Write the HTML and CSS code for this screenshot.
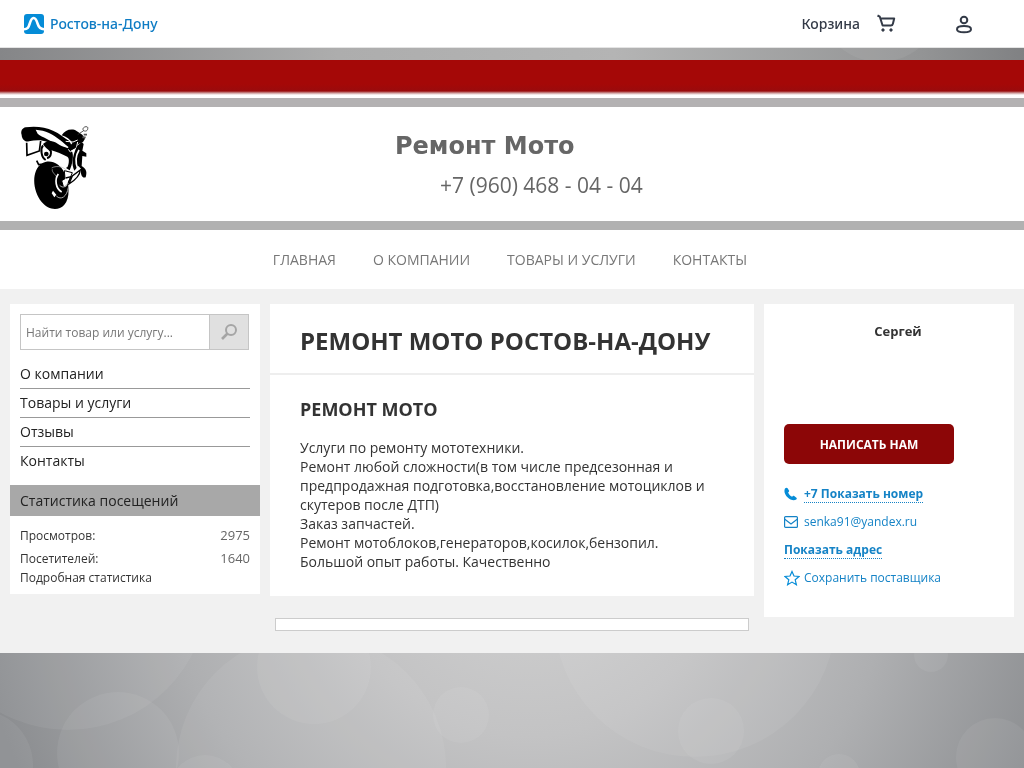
FILE: index.html
```html
<!DOCTYPE html>
<html lang="ru">
<head>
<meta charset="utf-8">
<meta name="viewport" content="width=device-width, initial-scale=1">
<title>Ремонт Мото Ростов-на-Дону</title>
<link rel="stylesheet" href="styles.css">
</head>
<body>
<svg class="backdrop" viewBox="0 0 1024 768" preserveAspectRatio="xMidYMax slice" aria-hidden="true">
  <defs>
    <radialGradient id="glow" gradientUnits="userSpaceOnUse" cx="530" cy="540" r="560">
      <stop offset="0" stop-color="#d2d2d2"/>
      <stop offset=".35" stop-color="#c3c3c4"/>
      <stop offset=".65" stop-color="#aeafb1"/>
      <stop offset="1" stop-color="#8b8d90"/>
    </radialGradient>
    <linearGradient id="topshade" x1="0" x2="1" y1="0" y2="0">
      <stop offset="0" stop-color="#858688"/>
      <stop offset=".33" stop-color="#adadad"/>
      <stop offset=".6" stop-color="#b4b4b4"/>
      <stop offset=".9" stop-color="#939495"/>
      <stop offset="1" stop-color="#808183"/>
    </linearGradient>
  </defs>
  <rect width="1024" height="768" fill="url(#glow)"/>
  <rect width="1024" height="100" fill="url(#topshade)"/>
  <g fill="#fff" fill-opacity=".06">
    <circle cx="68" cy="590" r="140"/>
    <circle cx="118" cy="753" r="61"/>
    <circle cx="-22" cy="765" r="55"/>
    <circle cx="311" cy="768" r="135"/>
    <circle cx="314" cy="667" r="57"/>
    <circle cx="461" cy="715" r="28"/>
    <circle cx="205" cy="790" r="35"/>
    <circle cx="695" cy="616" r="141"/>
    <circle cx="711" cy="731" r="33"/>
    <circle cx="931" cy="655" r="17"/>
    <circle cx="995" cy="757" r="39"/>
    <circle cx="839" cy="775" r="21"/>
    <circle cx="880" cy="0" r="62"/>
  </g>
</svg>

<header class="topbar">
  <a class="city" href="#">
    <svg width="20" height="20" viewBox="0 0 20 20" aria-hidden="true"><rect width="20" height="20" rx="3" fill="#058cd7"/><path d="M0 15.200c3.600 0 4.600-1.700 5.700-5.500C6.700 6 7.500 4 9.600 4s3 2 4 5.700c1.100 3.800 2.600 5.500 6.400 5.500" fill="none" stroke="#fff" stroke-width="2.600"/></svg>
    <span>Ростов-на-Дону</span>
  </a>
  <a class="cart" href="#">
    <span>Корзина</span>
    <svg width="20" height="20" viewBox="0 0 20 20" fill="none" stroke="#333a47" stroke-width="2" stroke-linejoin="round" aria-hidden="true"><path d="M.500 1.500l2.300 1.200L5.600 11.500h8.200c1.200 0 1.800-.6 2.100-1.800l1.300-5.200H3.500"/><circle cx="6" cy="16" r="1.200" fill="#333a47" stroke-width="1"/><circle cx="14" cy="16" r="1.200" fill="#333a47" stroke-width="1"/></svg>
  </a>
  <a class="user" href="#" aria-label="Личный кабинет">
    <svg width="18" height="20" viewBox="0 0 18 20" fill="none" stroke="#333a47" stroke-width="2" aria-hidden="true"><circle cx="9" cy="6" r="3.300"/><path d="M9 12c-4.500 0-7 1-7 3.200S4.500 18.200 9 18.200s7-.8 7-3-2.500-3.200-7-3.200z"/></svg>
  </a>
</header>

<div class="site">
  <div class="stripe"></div>
  <div class="banner">
    <svg class="logo" width="80" height="110" viewBox="3 -39 240 330" aria-label="Мотоцикл" role="img">
      <path d="M20 45c-4-12 2-21 12-23 30-5 60 0 82 10 20 9 32 20 50 32l6 14-10 16c-30-6-45-16-62-28-20-8-38-6-56-2-12 4-22-8-22-19z"/>
      <path d="M62 29c30 2 52 14 74 32 10 8 20 18 30 24l-4 12c-22-6-36-12-46-26-8-12-34-18-48-30z" fill="#fff"/>
      <path d="M35 68l1 38 37-13 4-30" fill="#fff" stroke="#000" stroke-width="5"/>
      <path d="M84 72c14-14 30-10 44-1 16 11 32 10 42 22 8 10 2 42-6 58l-10-6c6-16 6-26-6-32-14-8-32-10-42-18-8-8-18-14-22-23z"/>
      <path d="M107 90c14 4 34 12 50 20 7 4 5 22 0 32l-48-22c-6-8-8-20-2-30z" fill="#fff"/>
      <path d="M84 76c-8 10-6 36 8 44m8-38c12 8 10 30-4 32" fill="none" stroke="#000" stroke-width="6"/>
      <circle cx="94" cy="102" r="7"/>
      <path d="M140 46c10-14 22-20 40-16l22 14 8 12-6 10-14 6-10 14-18 8-6-8 16-16c-6-12-18-20-32-24z"/>
      <path d="M152 64l22 2 14-6M160 88l6 8 18-12 4-18" fill="none" stroke="#fff" stroke-width="3"/>
      <path d="M188 44l18-12c-8-8 8-16 12-10 2 8-4 14-12 10" fill="none" stroke="#333" stroke-width="2.500"/>
      <path d="M206 44h10M202 52h10" stroke="#555" stroke-width="5"/>
      <path d="M186 78l14-12 6 6-4 20 12 8v10l-12-2-2 30c16 10 16 20 12 34-12 4-16-12-14-26l-8-8-12 14c-8-18-8-38 8-74z"/>
      <path d="M192 90c-12 20-10 40-4 56" fill="none" stroke="#fff" stroke-width="5"/>
      <path d="M65 122l6 12 18-2" fill="none" stroke="#000" stroke-width="5"/>
      <path d="M82 130c22-14 54 0 66 28 16 34 18 76 0 96-18 20-48 16-68-8-28-34-32-96 2-116z"/>
      <path d="M110 144c16-10 42-2 48 12M112 148c-2 8 8 14 12 22" fill="none" stroke="#bbb" stroke-width="2"/>
      <path d="M130 162c-12 16-8 44 10 54" fill="none" stroke="#fff" stroke-width="5"/>
      <path d="M148 152l24 6-16 40c-6 6-10 4-12-2l-4-14 10-6z" fill="#fff" stroke="#000" stroke-width="3"/>
      <path d="M196 150c-2 22-22 34-34 42l10-24z" fill="#fff" stroke="#000" stroke-width="4"/>
      <path d="M114 212l10 12-6 8-8-12z" fill="#fff"/>
      <path d="M124 228c14 14 32 2 36-26M134 196c10 10 18 4 24-6" fill="none" stroke="#aaa" stroke-width="3"/>
      <path d="M152 174l16-4-8 18" fill="none" stroke="#000" stroke-width="4"/>
    </svg>
    <div class="brand">
      <p class="brand-name">Ремонт Мото</p>
      <p class="brand-phone">+7 (960) 468 - 04 - 04</p>
    </div>
  </div>
  <nav class="menu">
    <a href="#">ГЛАВНАЯ</a>
    <a href="#">О КОМПАНИИ</a>
    <a href="#">ТОВАРЫ И УСЛУГИ</a>
    <a href="#">КОНТАКТЫ</a>
  </nav>

  <div class="columns">
    <aside class="card side">
      <form class="search">
        <input type="text" aria-label="Поиск" placeholder="Найти товар или услугу...">
        <button type="button" aria-label="Найти"><svg width="18" height="18" viewBox="0 0 18 18" fill="none" stroke="#a5a5a5" stroke-width="2" aria-hidden="true"><circle cx="11" cy="7" r="5"/><path d="M7.500 10.500L2 16" stroke-width="2.600"/></svg></button>
      </form>
      <ul class="side-menu">
        <li><a href="#">О компании</a></li>
        <li><a href="#">Товары и услуги</a></li>
        <li><a href="#">Отзывы</a></li>
        <li><a href="#">Контакты</a></li>
      </ul>
      <h2 class="stats-title">Статистика посещений</h2>
      <dl class="stats">
        <div><dt>Просмотров:</dt><dd>2975</dd></div>
        <div><dt>Посетителей:</dt><dd>1640</dd></div>
      </dl>
      <a class="stats-more" href="#">Подробная статистика</a>
    </aside>

    <main class="content">
      <article class="card">
        <h1>РЕМОНТ МОТО РОСТОВ-НА-ДОНУ</h1>
        <div class="text">
          <h2>РЕМОНТ МОТО</h2>
          <p>Услуги по ремонту мототехники.<br>Ремонт любой сложности(в том числе предсезонная и предпродажная подготовка,восстановление мотоциклов и скутеров после ДТП)<br>Заказ запчастей.<br>Ремонт мотоблоков,генераторов,косилок,бензопил.<br>Большой опыт работы. Качественно</p>
        </div>
      </article>
      <div class="empty-box"></div>
    </main>

    <aside class="card contact">
      <p class="person">Сергей</p>
      <button type="button" class="write">НАПИСАТЬ НАМ</button>
      <ul class="contacts">
        <li><svg width="14" height="14" viewBox="0 0 14 14" aria-hidden="true"><path d="M1 1.500C2 .5 3 .4 3.600 1.200l1.400 2.300c.4.700 0 1.200-.9 2 .8 1.900 2 3.300 4 4.300.8-.9 1.400-1.200 2.100-.7l2.200 1.600c.7.600.4 1.500-.6 2.100C6.500 15-1.800 7 1 1.500z" fill="#058cd7"/></svg><a class="dotted" href="#">+7 Показать номер</a></li>
        <li><svg width="14" height="12" viewBox="0 0 14 12" fill="none" stroke="#1583c6" stroke-width="1.200" aria-hidden="true"><rect x=".6" y=".6" width="12.800" height="10.800" rx="1"/><path d="M.5 3L7 8l6.500-5"/></svg><a href="#">senka91@yandex.ru</a></li>
        <li><a class="dotted" href="#">Показать адрес</a></li>
        <li><svg width="16" height="16" viewBox="0 0 16 16" fill="none" stroke="#058cd7" stroke-width="1.200" aria-hidden="true"><path d="M8 1.500l2 4.500 5 .5-3.800 3.300 1.200 4.900L8 12.100l-4.400 2.600 1.200-4.900L1 6.500 6 6z"/></svg><a href="#">Сохранить поставщика</a></li>
      </ul>
    </aside>
  </div>
</div>
</body>
</html>
```

FILE: styles.css
```css
* { box-sizing: border-box; }
body {
  margin: 0;
  font-family: "Open Sans", "Noto Sans", sans-serif;
  font-size: 14px;
  line-height: 19px;
  color: #333;
  background: #aaa;
}
h1, h2, p, ul, dl, dd { margin: 0; padding: 0; }
ul { list-style: none; }
a { color: inherit; text-decoration: none; }
svg { display: block; flex: none; }

.backdrop { position: fixed; inset: 0; width: 100%; height: 100%; z-index: -1; }

.topbar {
  display: flex;
  align-items: center;
  height: 48px;
  padding: 0 51px 0 24px;
  background: #fff;
  border-bottom: 1px solid #e4e4e4;
  font-family: "Noto Sans", sans-serif;
  font-weight: 500;
  color: #333a47;
}
.city { display: flex; align-items: center; gap: 6px; color: #0e7cc4; }
.cart { display: flex; align-items: center; gap: 17px; margin-left: auto; }
.user { margin-left: 58px; }

.site { margin-top: 12px; background: #f1f1f1; padding-bottom: 22px; }
.stripe {
  height: 38px;
  background: linear-gradient(#a50807 0 24px, #9a0b0c 31px, #c99 33px, #fff 35px);
}
.banner {
  display: flex;
  height: 132px;
  padding-left: 16px;
  background: #fff;
  border-top: 9px solid #b3b1b2;
  border-bottom: 9px solid #b1b1b1;
  color: #666;
}
.brand { flex: 1; padding: 24px 0 0 299px; }
.brand-name { font: bold 24px/30px "DejaVu Sans", sans-serif; }
.brand-phone { padding: 7px 0 0 45px; font-size: 21px; line-height: 34px; }

.menu {
  display: flex;
  justify-content: center;
  gap: 37px;
  padding: 20px 4px 20px 0;
  background: #fff;
  color: #777;
}

.columns {
  display: grid;
  grid-template-columns: 250px minmax(0, 1fr) 250px;
  gap: 10px;
  align-items: start;
  padding: 15px 10px 0;
}
.card { background: #fff; }

.side { padding: 10px 10px 9px; }
.search { display: flex; height: 36px; margin-right: 1px; border: 1px solid #c5c5c5; }
.search input {
  flex: 1;
  min-width: 0;
  padding: 0 5px;
  border: 0;
  font: 12px "Open Sans", sans-serif;
  color: #555;
}
.search input::placeholder { color: #777; opacity: 1; }
.search button {
  display: grid;
  place-items: center;
  width: 39px;
  padding: 0;
  border: 0;
  border-left: 1px solid #c5c5c5;
  background: #e0e0e0;
}
.side-menu { margin-top: 10px; color: #222; }
.side-menu li { padding: 4px 0 5px; border-bottom: 1px solid #999; }
.side-menu li:last-child { border: 0; }
.stats-title {
  margin: 10px -10px 0;
  padding: 6px 10px;
  background: #a8a8a8;
  color: #222;
  font-size: 14px;
  font-weight: 400;
}
.stats { margin-top: 8px; font-size: 12px; line-height: 23px; }
.stats div { display: flex; justify-content: space-between; }
.stats dd { font-size: 13px; color: #666; }
.stats-more { display: block; font-size: 12px; line-height: 15px; }

h1 {
  padding: 20px 30px 16px;
  border-bottom: 2px solid #eee;
  font-size: 24px;
  line-height: 33px;
}
.text { padding: 22px 30px 25px; }
.text h2 { font-size: 18px; line-height: 24px; }
.text p { margin-top: 17px; }
.empty-box { height: 13px; margin: 22px 5px 0; border: 1px solid #ccc; background: #fff; }

.contact { padding: 18px 20px 30px; font-size: 12px; }
.person { padding-left: 18px; text-align: center; font-size: 13px; font-weight: 700; }
.write {
  display: block;
  width: 170px;
  height: 40px;
  margin-top: 83px;
  border: 0;
  border-radius: 5px;
  background: #8c0607;
  color: #fff;
  font: bold 12px "Open Sans", sans-serif;
}
.contacts { display: grid; gap: 9px; margin-top: 20px; color: #1583c6; }
.contacts li { display: flex; align-items: center; min-height: 19px; }
.contacts svg { margin-right: 6px; }
.contacts svg[width="16"] { margin-right: 4px; }
.dotted { font-weight: 700; line-height: 17px; border-bottom: 1px dotted #1583c6; }
```
